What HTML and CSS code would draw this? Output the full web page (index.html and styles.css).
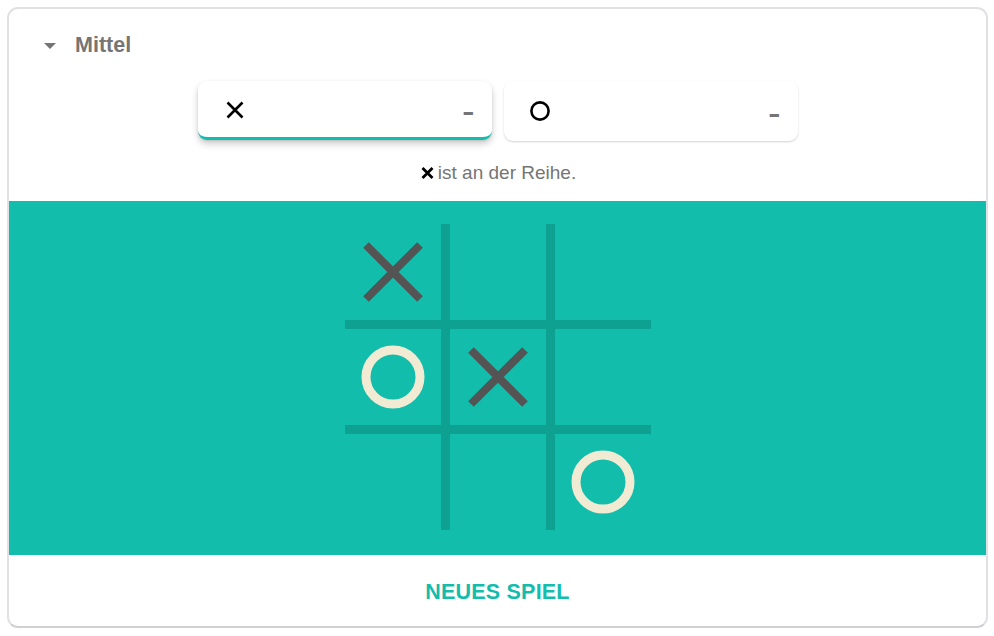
FILE: index.html
```
<!DOCTYPE html>
<html lang="de">
<head>
<meta charset="utf-8">
<title>Tic Tac Toe</title>
<link rel="stylesheet" href="styles.css">
</head>
<body>
<div class="card">
  <div class="header">
    <span class="caret"></span>
    <span class="level">Mittel</span>
  </div>
  <div class="players">
    <div class="player active">
      <svg class="pico" width="20" height="20" viewBox="0 0 20 20"><path d="M2.5 2.5L17.5 17.5M17.5 2.5L2.5 17.5" stroke="#000" stroke-width="2.6" fill="none"/></svg>
      <span class="score">-</span>
    </div>
    <div class="player">
      <svg class="pico" width="20" height="20" viewBox="0 0 20 20"><circle cx="10" cy="10" r="8.6" stroke="#000" stroke-width="2.6" fill="none"/></svg>
      <span class="score">-</span>
    </div>
  </div>
  <div class="status">
    <svg class="sico" width="13" height="12" viewBox="0 0 13 12"><path d="M1.5 1L11.5 11M11.5 1L1.5 11" stroke="#000" stroke-width="2.8" fill="none"/></svg>
    <span>ist an der Reihe.</span>
  </div>
  <div class="stage">
    <div class="board">
      <div class="cell"><svg width="60" height="60" viewBox="0 0 60 60"><path d="M3 3L57 57M57 3L3 57" stroke="#545454" stroke-width="8" fill="none"/></svg></div>
      <div class="cell"></div>
      <div class="cell"></div>
      <div class="cell"><svg width="64" height="64" viewBox="0 0 64 64"><circle cx="32" cy="32" r="27" stroke="#f2ebd3" stroke-width="9" fill="none"/></svg></div>
      <div class="cell"><svg width="60" height="60" viewBox="0 0 60 60"><path d="M3 3L57 57M57 3L3 57" stroke="#545454" stroke-width="8" fill="none"/></svg></div>
      <div class="cell"></div>
      <div class="cell"></div>
      <div class="cell"></div>
      <div class="cell"><svg width="64" height="64" viewBox="0 0 64 64"><circle cx="32" cy="32" r="27" stroke="#f2ebd3" stroke-width="9" fill="none"/></svg></div>
    </div>
  </div>
  <div class="footer">
    <span class="newgame">NEUES SPIEL</span>
  </div>
</div>
</body>
</html>
```
FILE: styles.css
```
html, body {
  margin: 0;
  padding: 0;
  background: #ffffff;
}
body {
  font-family: "Liberation Sans", Arial, sans-serif;
  padding: 7px 6px 0 7px;
}
.card {
  width: 981px;
  height: 621px;
  box-sizing: border-box;
  border: 2px solid #e1e1e5;
  border-bottom-color: #d0d0d4;
  border-radius: 11px;
  overflow: hidden;
  display: flex;
  flex-direction: column;
  background: #fff;
}
.header {
  display: flex;
  align-items: center;
  padding: 26px 0 25px 35px;
  height: 21px;
}
.caret {
  width: 0;
  height: 0;
  border-left: 6px solid transparent;
  border-right: 6px solid transparent;
  border-top: 6px solid #757575;
  margin-top: 0;
  margin-right: 19px;
}
.level {
  font-size: 21.5px;
  line-height: 21px;
  font-weight: bold;
  color: #757575;
}
.players {
  display: flex;
  justify-content: center;
  gap: 12px;
  padding-left: 1px;
}
.player {
  width: 294px;
  height: 59px;
  box-sizing: border-box;
  border-radius: 9px;
  background: #fff;
  display: flex;
  align-items: center;
  justify-content: space-between;
  padding: 0 19px 0 27px;
  border-bottom: 3px solid transparent;
  box-shadow: 0 1px 2px rgba(0, 0, 0, 0.18);
}
.player + .player {
  padding-left: 26px;
  height: 60px;
  border-bottom-width: 0;
}
.player.active {
  border-bottom-color: #12bdac;
  box-shadow: 0 4px 7px rgba(0, 0, 0, 0.2), 0 1px 2px rgba(0, 0, 0, 0.1);
}
.pico {
  display: block;
  margin-top: 2px;
}
.player + .player .pico {
  margin-top: 0;
}
.score {
  font-size: 26px;
  line-height: 26px;
  font-weight: bold;
  color: #757575;
  margin-top: 4px;
  transform: scaleX(1.4);
}
.status {
  display: flex;
  justify-content: center;
  align-items: center;
  gap: 4px;
  margin-top: 22px;
  height: 19px;
  font-size: 19px;
  line-height: 19px;
  color: #757575;
  padding-left: 2px;
}
.sico {
  display: block;
}
.stage {
  margin-top: 19px;
  background: #12bdac;
  height: 354px;
  box-sizing: border-box;
  padding-top: 23px;
  display: flex;
  justify-content: center;
}
.board {
  display: grid;
  grid-template-columns: repeat(3, 96px);
  grid-template-rows: repeat(3, 96px);
  gap: 9px;
  background: #0ea192;
  width: 306px;
  height: 306px;
  margin-left: 1px;
}
.cell {
  background: #12bdac;
  display: flex;
  align-items: center;
  justify-content: center;
}
.cell svg {
  display: block;
}
.footer {
  flex: 1;
  display: flex;
  align-items: center;
  justify-content: center;
}
.newgame {
  font-size: 21.5px;
  line-height: 21px;
  font-weight: bold;
  color: #12bdac;
  letter-spacing: 0.2px;
  margin-top: 4px;
}
```
